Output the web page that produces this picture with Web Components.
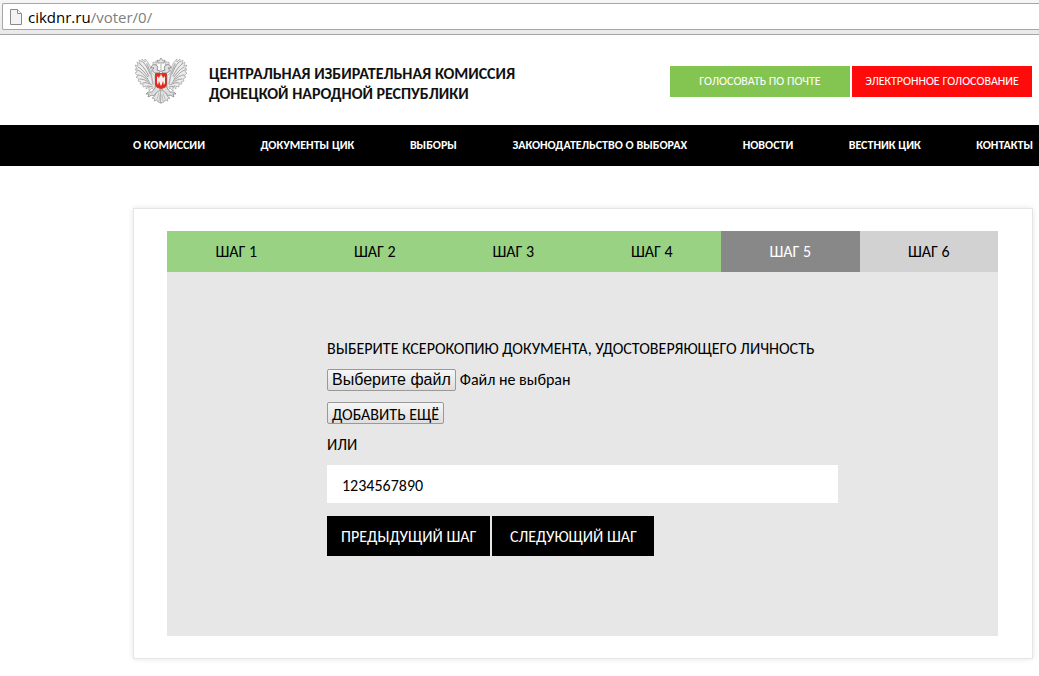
<!DOCTYPE html>
<html lang="ru">
<head>
<meta charset="utf-8">
<meta name="viewport" content="width=device-width, initial-scale=1">
<title>ЦИК ДНР</title>
<style>
  body {
    margin: 0;
    background: #fff;
    color: #000;
    font: 16px/20px Carlito, Calibri, "Noto Sans", sans-serif;
    --gutter-left: 133px;
    --gutter-right: 6px;
  }
</style>
</head>
<body>
<address-bar host="cikdnr.ru" path="/voter/0/"></address-bar>

<site-header>
  <span slot="title">ЦЕНТРАЛЬНАЯ ИЗБИРАТЕЛЬНАЯ КОМИССИЯ</span>
  <span slot="title">ДОНЕЦКОЙ НАРОДНОЙ РЕСПУБЛИКИ</span>
  <vote-link color="#84c551">ГОЛОСОВАТЬ ПО ПОЧТЕ</vote-link>
  <vote-link color="#ff0b0b">ЭЛЕКТРОННОЕ ГОЛОСОВАНИЕ</vote-link>
</site-header>

<site-nav>
  <nav-item>О КОМИССИИ</nav-item>
  <nav-item>ДОКУМЕНТЫ ЦИК</nav-item>
  <nav-item>ВЫБОРЫ</nav-item>
  <nav-item>ЗАКОНОДАТЕЛЬСТВО О ВЫБОРАХ</nav-item>
  <nav-item>НОВОСТИ</nav-item>
  <nav-item>ВЕСТНИК ЦИК</nav-item>
  <nav-item>КОНТАКТЫ</nav-item>
</site-nav>

<voter-card>
  <step-tabs slot="steps" count="6" current="5"></step-tabs>
  <document-form></document-form>
</voter-card>

<script>
class AddressBar extends HTMLElement {
  connectedCallback() {
    this.attachShadow({mode: 'open'})
        .innerHTML = this.render();
  }

  render() {
    return `<style>
  :host {
    display: block;
    padding: 3px 0 4px 2px;
    background: linear-gradient(#f6f6f6, #e9e9e9);
    border-bottom: 1px solid #a5a5a5;
  }
  .box {
    display: flex;
    align-items: center;
    gap: 6px;
    height: 25px;
    padding-left: 7px;
    background: #fff;
    border: 1px solid #a6a6a6;
    border-right: 0;
    border-radius: 2px 0 0 2px;
    font: 15px/24px "Open Sans", "Noto Sans", sans-serif;
  }
  .path { color: #808080; }
  svg { display: block; }
</style>
<div class="box">
  <svg width="12" height="16" viewBox="0 0 12 16" fill="none" stroke="#8a8a8a">
    <path d="M.5 .5h7l4 4v11H.5z" fill="#f3f3f3"/>
    <path d="M7.500 .5v4h4" fill="#fff"/>
  </svg>
  <span><span>${this.getAttribute('host')}</span><span class="path">${this.getAttribute('path')}</span></span>
</div>`
  }
}
customElements.define('address-bar', AddressBar);

class EagleEmblem extends HTMLElement {
  connectedCallback() {
    this.attachShadow({mode: 'open'})
        .innerHTML = this.render();
  }

  // one half of the eagle, the other one is its mirror
  render() {
    return `<style>
  :host { display: block; flex: none; }
  svg { display: block; }
</style>
<svg width="54" height="48" viewBox="0 0 54 48" role="img" aria-label="Герб">
  <defs>
    <g id="half" stroke-linejoin="round" stroke-linecap="round">
      <path d="M18 17C17 12 15 6 11 3L11 6L8 3L8 6L5 4L6 8L3 6L4 10L1 9L3 13L1 13L3 16L1 17L4 20L2 21L5 23L4 25L7 26L6 28L9 28L9 31L12 30L12 33L15 31L15 35L18 32L21 35V20Z" fill="#ededed" stroke="#a3a3a3" stroke-width=".7"/>
      <path d="M9 6C12 9 14 13 16 18M6 8C10 11 12 15 15 20M4 11C8 13 11 17 14 21M3 14C7 15 10 19 14 23M4 19C8 19 11 22 15 25M6 23C9 23 12 24 16 27M9 27C12 26 14 27 18 29M13 30L19 31" fill="none" stroke="#8c8c8c" stroke-width=".8"/>
      <path d="M13 8L17 18L19 28" fill="none" stroke="#b5b5b5" stroke-width="1.500"/>
      <path d="M25 17L21 17C18 16 18 13 20 12L17 12C17 9 20 8 22 9C24 10 24 12 23 14L26 15Z" fill="#e0e0e0" stroke="#777" stroke-width=".8"/>
      <path d="M19 8L19 6L21 7L22 5L23 8Z" fill="#eee" stroke="#999" stroke-width=".6"/>
      <path d="M22 30C21 33 19 34 18 36L14 36L12 38L15 38L14 41L18 39L20 40L22 37L26 35V31Z" fill="#ddd" stroke="#888" stroke-width=".8"/>
      <path d="M27 34L23 36L20 41L18 42L21 43L20 45L23 44L24 46L27 47Z" fill="#e6e6e6" stroke="#999" stroke-width=".7"/>
      <path d="M25 37L23 43M26 39L25 45" fill="none" stroke="#aaa" stroke-width=".7"/>
    </g>
  </defs>
  <use href="#half"/>
  <use href="#half" transform="matrix(-1 0 0 1 54 0)"/>
  <path d="M24 7L23 4L25 5L27 2L29 5L31 4L30 7Z" fill="#e4e4e4" stroke="#8c8c8c" stroke-width=".8"/>
  <path d="M27 8V15" stroke="#b0b0b0"/>
  <path d="M21.500 17.500H32.500V29Q32.500 31.500 27 32.500Q21.500 31.500 21.500 29Z" fill="#e8281d" stroke="#b8443c"/>
  <path d="M23 20L25 22L26 19.500L28 19.500L29 22L31 20L31 27L30 29L29 25L28 28L27 30L26 28L25 25L24 29L23 27Z" fill="#f5eeec"/>
  <path d="M26.500 18L28 18.500L27.500 20L26.500 20Z" fill="#f0c05a"/>
</svg>`
  }
}
customElements.define('eagle-emblem', EagleEmblem);

class SiteHeader extends HTMLElement {
  connectedCallback() {
    this.attachShadow({mode: 'open'})
        .innerHTML = this.render();
  }

  render() {
    return `<style>
  :host {
    display: flex;
    align-items: center;
    justify-content: space-between;
    box-sizing: border-box;
    min-height: 90px;
    padding: 0 7px 0 var(--gutter-left);
  }
  .brand {
    display: flex;
    align-items: center;
    gap: 21px;
    padding-left: 1px;
  }
  h1 {
    display: flex;
    flex-direction: column;
    margin: 0;
    padding-top: 8px;
    font-size: 16px;
    line-height: 20px;
    color: #111;
  }
  .votes {
    display: flex;
    gap: 2px;
    padding-top: 2px;
  }
</style>
<div class="brand">
  <eagle-emblem></eagle-emblem>
  <h1><slot name="title"></slot></h1>
</div>
<div class="votes"><slot></slot></div>`
  }
}
customElements.define('site-header', SiteHeader);

class VoteLink extends HTMLElement {
  connectedCallback() {
    this.attachShadow({mode: 'open'})
        .innerHTML = this.render();
  }

  render() {
    return `<style>
  :host { display: block; }
  a {
    display: block;
    box-sizing: border-box;
    min-width: 180px;
    padding: 0 12px;
    background: ${this.getAttribute('color')};
    color: #fff;
    font-size: 12px;
    line-height: 31px;
    text-align: center;
    text-decoration: none;
  }
</style>
<a href="#"><slot></slot></a>`
  }
}
customElements.define('vote-link', VoteLink);

class SiteNav extends HTMLElement {
  connectedCallback() {
    this.attachShadow({mode: 'open'})
        .innerHTML = this.render();
  }

  render() {
    return `<style>
  :host { display: block; background: #000; }
  nav {
    display: flex;
    justify-content: space-between;
    padding: 0 var(--gutter-right) 0 var(--gutter-left);
  }
</style>
<nav><slot></slot></nav>`
  }
}
customElements.define('site-nav', SiteNav);

class NavItem extends HTMLElement {
  connectedCallback() {
    this.attachShadow({mode: 'open'})
        .innerHTML = this.render();
  }

  render() {
    return `<style>
  :host { display: block; }
  a {
    display: block;
    color: #fff;
    font-size: 12px;
    font-weight: bold;
    line-height: 41px;
    text-decoration: none;
    white-space: nowrap;
  }
</style>
<a href="#"><slot></slot></a>`
  }
}
customElements.define('nav-item', NavItem);

class VoterCard extends HTMLElement {
  connectedCallback() {
    this.attachShadow({mode: 'open'})
        .innerHTML = this.render();
  }

  render() {
    return `<style>
  :host {
    display: block;
    margin: 42px var(--gutter-right) 16px var(--gutter-left);
    padding: 22px 34px 22px 33px;
    border: 1px solid #e5e5e5;
    box-shadow: 0 0 6px rgba(0, 0, 0, .1);
  }
  .body {
    padding: 67px 160px 80px;
    background: #e7e7e7;
  }
</style>
<slot name="steps"></slot>
<div class="body"><slot></slot></div>`
  }
}
customElements.define('voter-card', VoterCard);

class StepTabs extends HTMLElement {
  connectedCallback() {
    this.attachShadow({mode: 'open'})
        .innerHTML = this.render();
  }

  render() {
    const current = +this.getAttribute('current')
    let items = ''
    for (let i = 1; i <= +this.getAttribute('count'); i++) {
      const state = i < current ? 'done' : i === current ? 'current' : 'next'
      items += `<li class="${state}">ШАГ ${i}</li>`
    }
    return `<style>
  :host { display: block; }
  ol {
    display: flex;
    margin: 0;
    padding: 0;
    list-style: none;
  }
  li {
    flex: 1;
    line-height: 41px;
    text-align: center;
  }
  .done { background: #99d283; }
  .current { background: #888; color: #fff; }
  .next { background: #d2d2d2; }
</style>
<ol>${items}</ol>`
  }
}
customElements.define('step-tabs', StepTabs);

class DocumentForm extends HTMLElement {
  connectedCallback() {
    this.attachShadow({mode: 'open'})
        .innerHTML = this.render();

    this.$file = this.shadowRoot.querySelector('#file')
    this.$name = this.shadowRoot.querySelector('.name')
    this.$file.addEventListener('change', () => {
      this.$name.textContent = this.$file.files.length ? this.$file.files[0].name : 'Файл не выбран'
    })
  }

  render() {
    return `<style>
  :host { display: block; }
  form {
    display: flex;
    flex-direction: column;
    align-items: flex-start;
    gap: 11px;
  }
  label { line-height: 19px; }
  .picker {
    position: relative;
    display: flex;
    align-items: center;
    gap: 4px;
  }
  #file {
    position: absolute;
    inset: 0;
    width: 100%;
    opacity: 0;
  }
  .plain {
    box-sizing: border-box;
    height: 22px;
    padding: 2px 4px 0;
    border: 1px solid #999;
    border-radius: 2px;
    background: linear-gradient(#f6f6f6, #dedede);
    color: #000;
    font: inherit;
    line-height: 19px;
  }
  .choose {
    padding: 0 4px;
    font: 16px/20px "Liberation Sans", Arial, sans-serif;
  }
  #number {
    box-sizing: border-box;
    width: 100%;
    height: 38px;
    padding: 2px 15px 0;
    border: 0;
    background: #fff;
    color: #000;
    font: inherit;
  }
  .steps {
    display: flex;
    gap: 2px;
    padding-top: 2px;
  }
  .steps button {
    height: 40px;
    min-width: 162px;
    padding: 2px 14px 0;
    border: 0;
    background: #000;
    color: #fff;
    font: inherit;
  }
</style>
<form>
  <label for="file">ВЫБЕРИТЕ КСЕРОКОПИЮ ДОКУМЕНТА, УДОСТОВЕРЯЮЩЕГО ЛИЧНОСТЬ</label>
  <div class="picker">
    <span class="plain choose">Выберите файл</span>
    <span class="name">Файл не выбран</span>
    <input id="file" type="file">
  </div>
  <button class="plain" type="button">ДОБАВИТЬ ЕЩЁ</button>
  <label for="number">ИЛИ</label>
  <input id="number" type="text" value="1234567890">
  <div class="steps">
    <button type="button">ПРЕДЫДУЩИЙ ШАГ</button>
    <button type="button">СЛЕДУЮЩИЙ ШАГ</button>
  </div>
</form>`
  }
}
customElements.define('document-form', DocumentForm);
</script>
</body>
</html>
